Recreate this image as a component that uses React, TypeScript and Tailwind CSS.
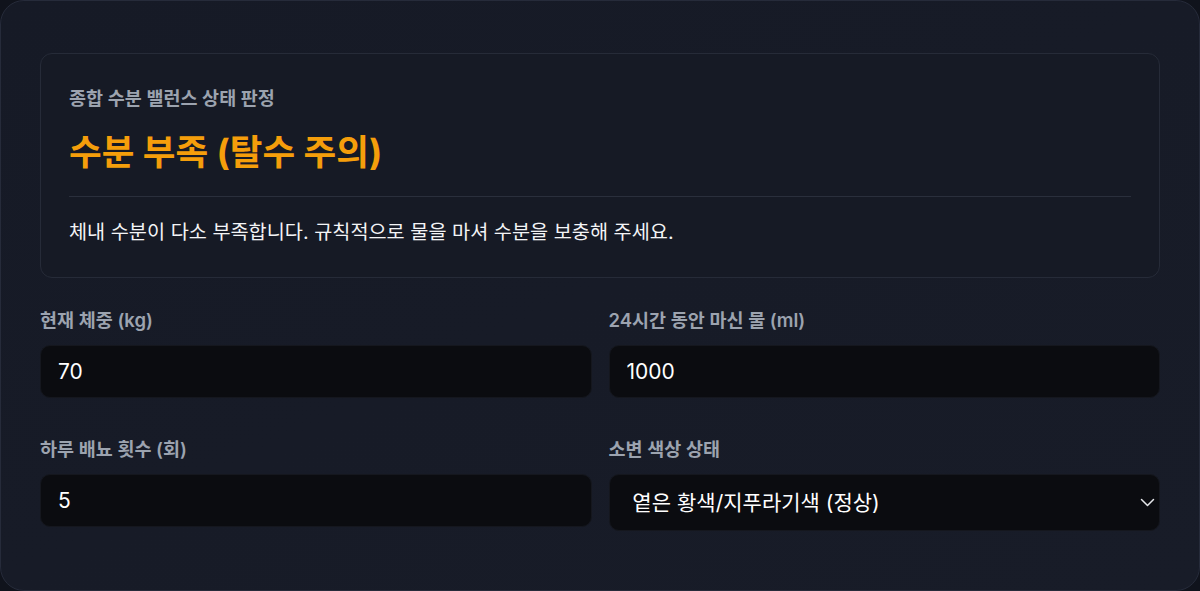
import React from "react";

const font = { fontFamily: 'Inter, "Noto Sans CJK KR", sans-serif' };

function Field({ label, children }: { label: string; children: React.ReactNode }) {
  return (
    <div className="flex flex-col gap-[13px]">
      <label className="text-[18.5px] font-semibold leading-[24px] text-[#9ca3af]">{label}</label>
      {children}
    </div>
  );
}

function NumberBox({ value }: { value: string }) {
  return (
    <div className="flex h-[53px] items-center rounded-[10px] border border-[#15171e] bg-[#0b0c10] px-[17px] text-[21px] text-white">
      {value}
    </div>
  );
}

export default function App() {
  return (
    <div className="min-h-[591px] bg-[#10131c]" style={font}>
      <div className="min-h-[591px] rounded-[24px] border border-[#262b3a] bg-gradient-to-br from-[#161a26] to-[#181c28] px-[39px] pt-[52px] pb-[40px]">
        <section className="rounded-[12px] border border-[#262b38] bg-[#161a25] px-[28px] pt-[32px] pb-[31px]">
          <div className="text-[18.5px] font-semibold leading-[24px] text-[#9ca3af]">종합 수분 밸런스 상태 판정</div>
          <div className="mt-[22px] text-[35.5px] font-bold leading-[42px] text-[#f59e0b]">수분 부족 (탈수 주의)</div>
          <div className="mt-[22px] h-px bg-[#2a2f3c]" />
          <p className="mt-[21px] text-[19.7px] leading-[28px] text-[#f3f4f6]">
            체내 수분이 다소 부족합니다. 규칙적으로 물을 마셔 수분을 보충해 주세요.
          </p>
        </section>

        <div className="mt-[30px] grid grid-cols-2 gap-x-[17px] gap-y-[39px]">
          <Field label="현재 체중 (kg)">
            <NumberBox value="70" />
          </Field>
          <Field label="24시간 동안 마신 물 (ml)">
            <NumberBox value="1000" />
          </Field>
          <Field label="하루 배뇨 횟수 (회)">
            <NumberBox value="5" />
          </Field>
          <Field label="소변 색상 상태">
            <div className="flex h-[57px] items-center justify-between rounded-[10px] border border-[#15171e] bg-[#0b0c10] pl-[23px] pr-[4px] text-[21px] text-white">
              <span>옅은 황색/지푸라기색 (정상)</span>
              <svg width="15" height="9" viewBox="0 0 15 9" fill="none" stroke="#e5e7eb" strokeWidth="1.5" strokeLinecap="round" strokeLinejoin="round">
                <path d="M1.5 1.5 7.5 7.5l6-6" />
              </svg>
            </div>
          </Field>
        </div>
      </div>
    </div>
  );
}
